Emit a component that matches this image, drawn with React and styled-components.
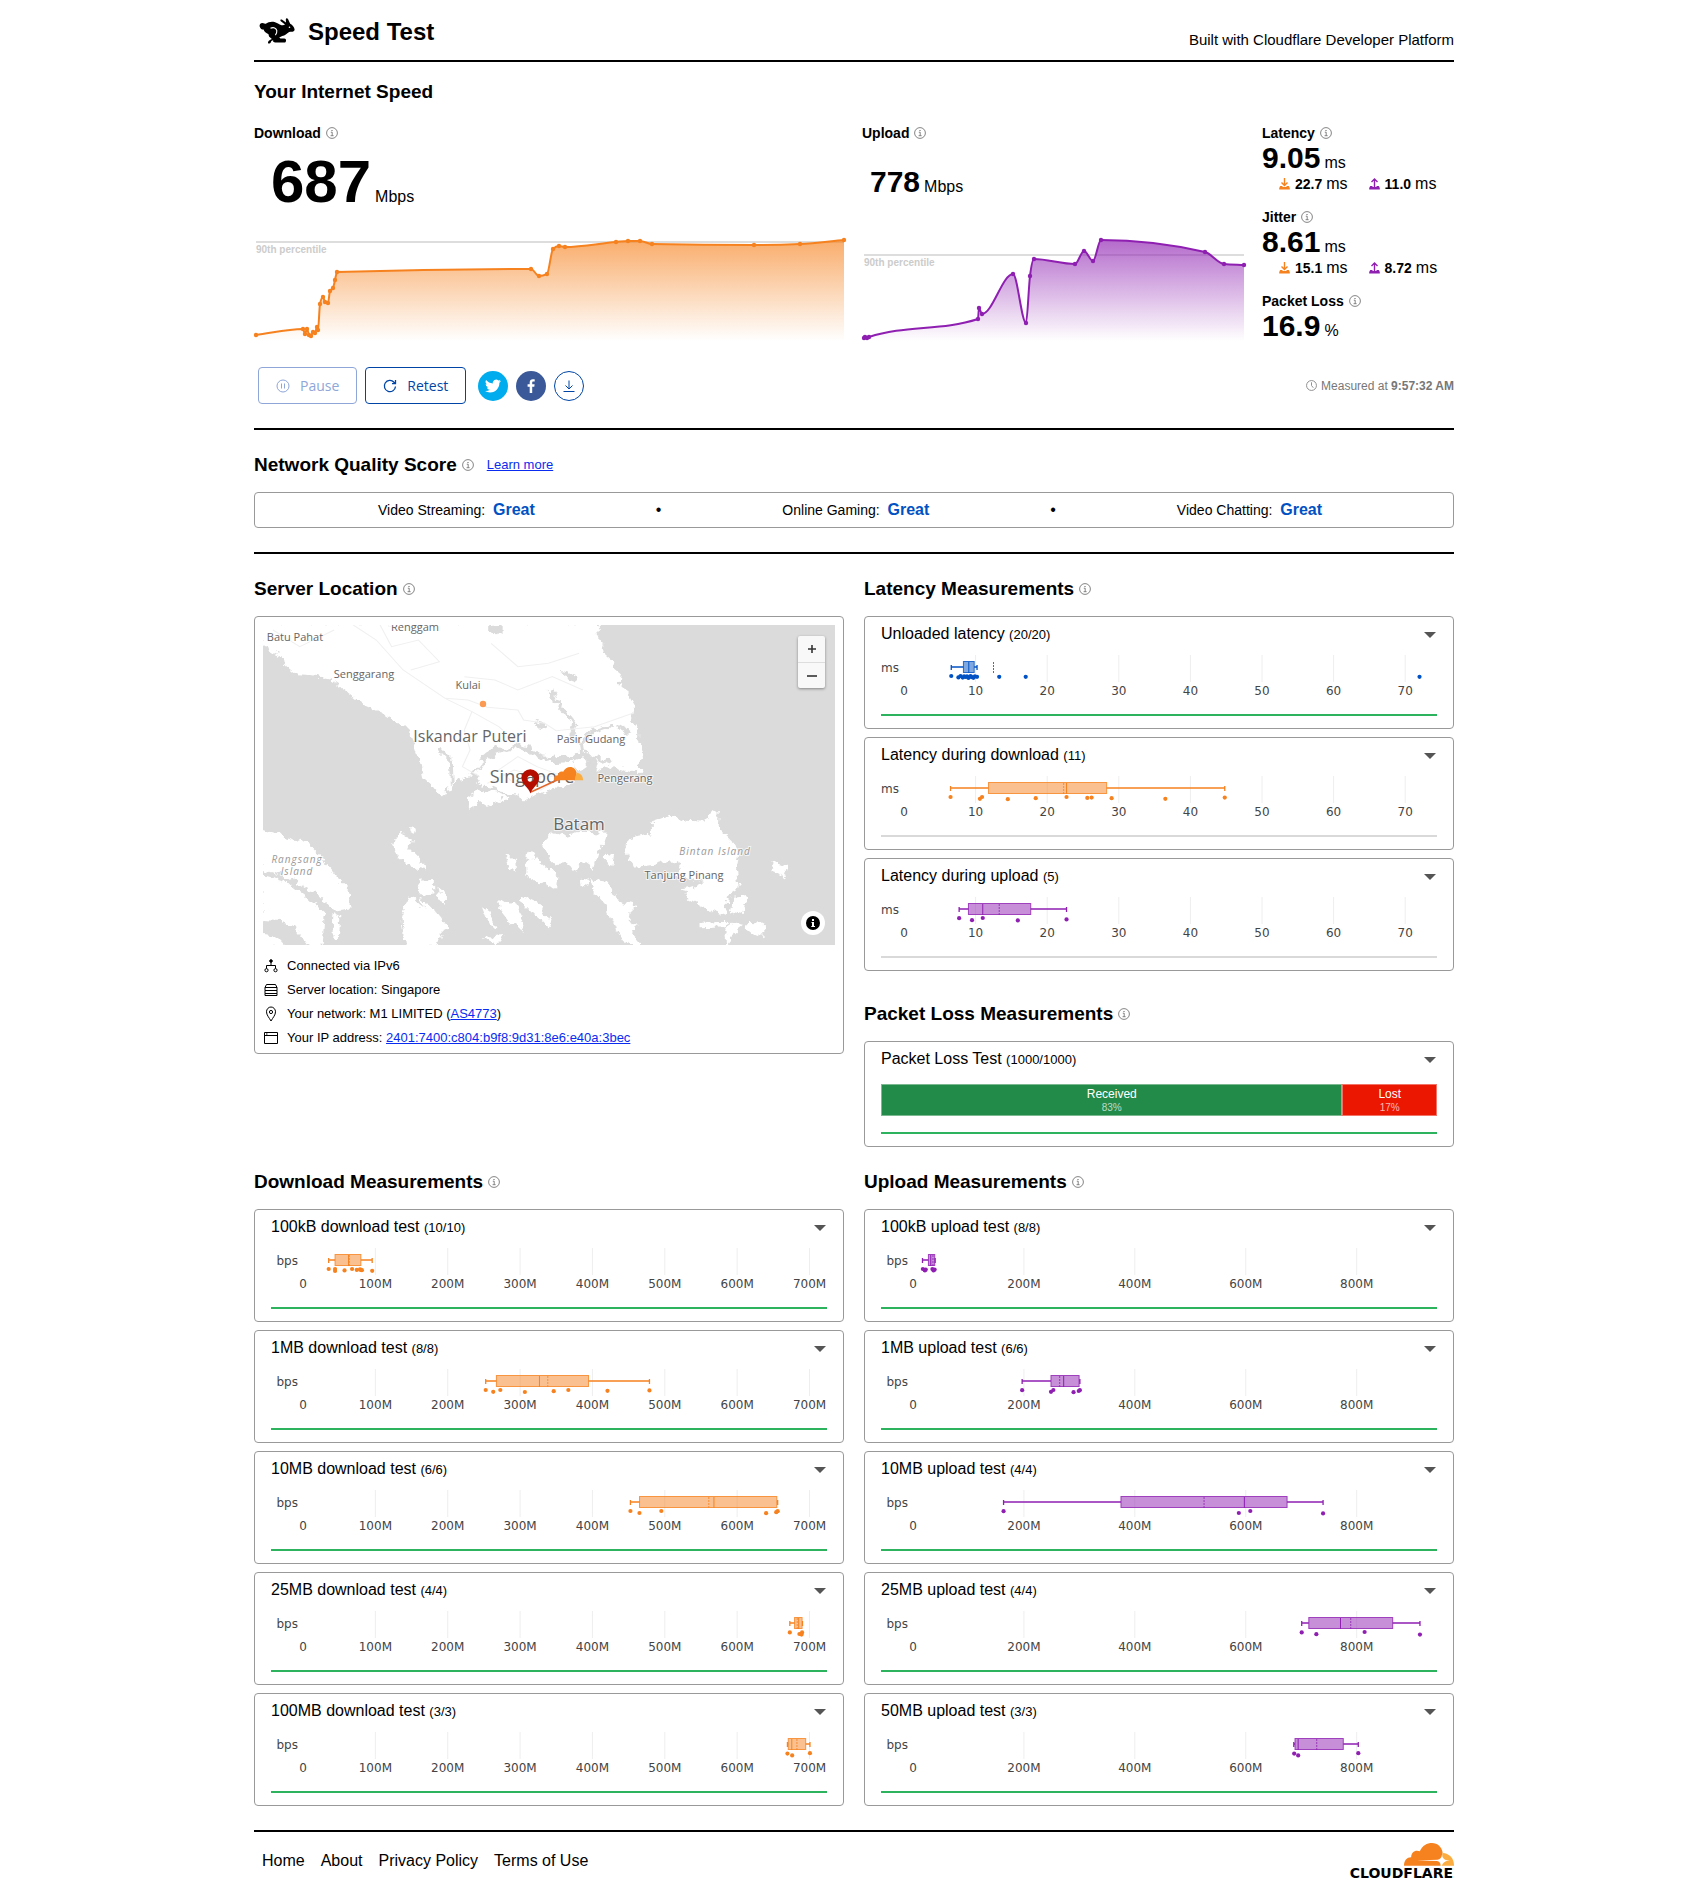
import React from "react"
import styled, { createGlobalStyle } from "styled-components"

const ORANGE = "#f6821f"
const PURPLE = "#8e1fb1"
const BLUE = "#0051c3"

const downloadSpeed = [
  [2, 105], [49, 99], [51, 104], [53, 99], [55, 105], [57, 106], [59, 102],
  [61, 103], [63, 97], [64, 100], [66, 74], [69, 67], [71, 72], [74, 73],
  [76, 61], [79, 58], [81, 50], [83, 42], [277, 39], [285, 46], [293, 44],
  [299, 19], [305, 16], [311, 17], [362, 12], [374, 11], [386, 11], [398, 14],
  [500, 15], [546, 14], [590, 10],
]

const uploadSpeed = [
  [2, 108], [3, 107], [5, 108], [7, 107], [116, 89], [117, 78], [120, 84],
  [151, 44], [164, 93], [168, 46], [172, 29], [213, 34], [222, 21], [231, 31],
  [239, 10], [343, 22], [362, 34], [382, 35],
]

// box = [low, q1, median, q3, high], points = [value, jitter]
const latencyTests = [
  {
    name: "Unloaded latency",
    count: "20/20",
    color: BLUE,
    box: [6.6, 8.3, 9.05, 9.8, 10.2],
    mean: 12.5,
    done: true,
    points: [
      [6.6, 0], [7.6, 1.4], [7.9, 0], [8.2, 1.6], [8.4, 0.4], [8.6, 1],
      [8.8, 0.4], [9, 2], [9.1, 1], [9.3, 0.2], [9.5, 1.2], [9.7, 1.8],
      [9.9, 0.4], [10.2, 0.8], [13.3, 0.8], [17, 0.8], [72, 0.8],
    ],
  },
  {
    name: "Latency during download",
    count: "11",
    color: ORANGE,
    box: [6.5, 11.8, 22.7, 28.3, 44.8],
    mean: 22.3,
    points: [
      [6.5, 0], [10.6, 1.8], [10.9, 0], [14.5, 2.2], [18.4, 1.2], [22.7, 0],
      [25.6, 0.9], [26.2, 0.6], [29, 1.2], [36.5, 1.8], [44.8, 0.6],
    ],
  },
  {
    name: "Latency during upload",
    count: "5",
    color: PURPLE,
    box: [7.7, 9, 11, 17.7, 22.7],
    mean: 13.3,
    points: [[7.7, 0.2], [9.5, 2.2], [11, 0], [15.9, 2.4], [22.7, 1.4]],
  },
]

const downloadTests = [
  {
    name: "100kB download test",
    count: "10/10",
    box: [35.5, 44.3, 63, 80, 95.6],
    mean: 64,
    points: [
      [35.5, 0], [44.3, 0], [44.3, 2], [57.4, 1.4], [67.8, 0], [74.3, 0.8],
      [78.7, 0.4], [80, 0.8], [81.4, 1.2], [95.6, 1.8],
    ],
  },
  {
    name: "1MB download test",
    count: "8/8",
    box: [252.5, 267.3, 326.8, 394.6, 478.8],
    mean: 338.3,
    points: [
      [252.5, 0], [262.9, 1.8], [272.7, 0], [306.6, 2], [346.5, 1.2],
      [366.7, 0], [420.8, 0.8], [478.8, 0.4],
    ],
  },
  {
    name: "10MB download test",
    count: "6/6",
    box: [452.5, 465.1, 567.9, 654.8, 656],
    mean: 560.8,
    points: [
      [452.5, 0], [465, 2], [495.2, 0], [640, 2.2], [654, 1.2], [656, 0.2],
    ],
  },
  {
    name: "25MB download test",
    count: "4/4",
    box: [672.8, 679.3, 685, 689.7, 690.3],
    mean: 683,
    points: [[672.8, 0.4], [686, 2], [689, 2.6], [689.7, 0.4]],
  },
  {
    name: "100MB download test",
    count: "3/3",
    box: [669.5, 670.6, 675.5, 694.7, 700.6],
    mean: 682.6,
    points: [[669.5, 0.6], [676, 2.4], [700.6, 0.2]],
  },
]

const uploadTests = [
  {
    name: "100kB upload test",
    count: "8/8",
    box: [17.1, 27.8, 32, 39.2, 39.9],
    mean: 36,
    points: [
      [17.8, 0], [21.4, 1.4], [23, 0.6], [35, 0], [37, 1.4], [39, 0.6],
    ],
  },
  {
    name: "1MB upload test",
    count: "6/6",
    box: [196.8, 248.8, 271.7, 299.5, 300.9],
    mean: 264.5,
    points: [
      [196.8, 0.2], [248.8, 1.8], [253.1, 0], [289.5, 2.2], [298.8, 1],
      [300.9, 0.2],
    ],
  },
  {
    name: "10MB upload test",
    count: "4/4",
    box: [163.3, 375, 597.5, 674.5, 739.4],
    mean: 524.8,
    points: [[163.3, 0.2], [587.5, 2], [608.2, 0], [739.4, 2.4]],
  },
  {
    name: "25MB upload test",
    count: "4/4",
    box: [700.9, 713.7, 770.8, 864.9, 914.1],
    mean: 789.3,
    points: [[700.9, 0.4], [727.3, 2.2], [814.3, 0], [914.1, 2.6]],
  },
  {
    name: "50MB upload test",
    count: "3/3",
    box: [686.6, 688.8, 694.5, 775.8, 802.9],
    mean: 728,
    points: [[687.3, 0.6], [694.5, 2.4], [802.9, 0.2]],
  },
]

const latencyScale = {
  unit: "ms",
  origin: 23,
  step: 7.16,
  ticks: [10, 20, 30, 40, 50, 60, 70],
  suffix: "",
}

const downloadScale = {
  unit: "bps",
  origin: 32,
  step: 0.7236,
  ticks: [100, 200, 300, 400, 500, 600, 700],
  suffix: "M",
}

const uploadScale = {
  unit: "bps",
  origin: 32,
  step: 0.5546,
  ticks: [200, 400, 600, 800],
  suffix: "M",
}

// monotone cubic through the points, so the curve never overshoots a sample
const monotonePath = pts => {
  const n = pts.length
  const slopes = []
  for (let i = 0; i < n - 1; i++) {
    slopes.push((pts[i + 1][1] - pts[i][1]) / (pts[i + 1][0] - pts[i][0]))
  }
  const tangents = pts.map((p, i) => {
    if (i === 0) return slopes[0]
    if (i === n - 1) return slopes[n - 2]
    const a = slopes[i - 1]
    const b = slopes[i]
    if (a * b <= 0) return 0
    const h0 = p[0] - pts[i - 1][0]
    const h1 = pts[i + 1][0] - p[0]
    const mid = (a * h1 + b * h0) / (h0 + h1)
    return (
      2 * Math.sign(a) * Math.min(Math.abs(a), Math.abs(b), Math.abs(mid) / 2)
    )
  })
  let d = `M${pts[0][0]},${pts[0][1]}`
  for (let i = 0; i < n - 1; i++) {
    const [x0, y0] = pts[i]
    const [x1, y1] = pts[i + 1]
    const dx = (x1 - x0) / 3
    d += `C${x0 + dx},${y0 + dx * tangents[i]} ${x1 - dx},${
      y1 - dx * tangents[i + 1]
    } ${x1},${y1}`
  }
  return d
}

const Info = () => (
  <InfoIcon viewBox="0 0 12 12" aria-hidden="true">
    <circle cx="6" cy="6" r="5.4" />
    <path d="M4.8 5.2h1.4v3.4M4.6 8.7h3" />
    <path d="M6 3v1" strokeWidth="1.1" />
  </InfoIcon>
)

const Rabbit = () => (
  <svg width="36" height="26" viewBox="0 0 36 26" aria-hidden="true">
    <path d="M.6 8.2C.4 6 2.200 4.600 4 5.200 5.200 5.200 6.200 6 6.800 5.700 9 4 12.500 3.200 15.500 4 18 4.600 20 6.500 22.500 7.200 24 7.500 25.200 7.200 26 6.600L21.800 3.200C20.800 2 21.300 1 22.800 1.600L27 4.400 26.800 1.200C27 0 28.300-.1 29 1.100L31.200 5.800C33.500 7 35.300 9.200 35.600 11.400 35.600 12.800 34 14 31.600 13.800 29.500 13.700 28.800 15.200 26.800 16.500 25.800 17.200 24.600 17.800 23.200 18.100L20.200 19.600 21.500 20.600H25.300C27.300 20.600 27.600 23.400 26.200 24.500H16.200C14.500 24.500 13.600 23.300 14.300 22.300L10 18.600 9.500 16.200C7.200 15.400 5 13.800 4.600 11.600 2.800 11.800 1 10.200.6 8.200Z" />
    <path d="M14.500 20.200 11.800 21.400C10 22.200 8.800 23.500 9 24.900 9.400 26 11.200 25.500 11.700 24.400L12.400 23 14.500 22Z" />
    <path
      d="M11.500 10.300C14.500 8.700 17.400 10 17.800 12.700 18 14.600 17.200 16 16.400 17.100"
      fill="none"
      stroke="#fff"
      strokeWidth="1.100"
    />
    <circle cx="30.500" cy="9.300" r=".8" fill="#fff" />
  </svg>
)

const SpeedChart = ({ id, width, color, points, percentile }) => {
  const line = monotonePath(points)
  const first = points[0]
  const last = points[points.length - 1]
  return (
    <ChartSvg viewBox={`0 0 ${width} 112`} role="img" aria-label={id}>
      <defs>
        <linearGradient id={id} x1="0" y1="0" x2="0" y2="1">
          <stop offset="0" stopColor={color} stopOpacity="0.66" />
          <stop offset="1" stopColor={color} stopOpacity="0" />
        </linearGradient>
      </defs>
      <path
        d={`M2,${percentile}H${width}`}
        stroke="#d2d2d2"
        strokeWidth="1.500"
      />
      <ChartNote x="2" y={percentile + 11}>
        90th percentile
      </ChartNote>
      <path
        d={`${line}L${last[0]},111L${first[0]},111Z`}
        fill={`url(#${id})`}
      />
      <path d={line} fill="none" stroke={color} strokeWidth="2" />
      {points.map(([x, y], i) => (
        <circle key={i} cx={x} cy={y} r="2.200" fill={color} />
      ))}
    </ChartSvg>
  )
}

const BoxPlot = ({ scale, color, box, mean, points }) => {
  const x = v => scale.origin + v * scale.step
  const [low, q1, median, q3, high] = box.map(x)
  return (
    <ChartSvg viewBox="0 0 556 56" aria-hidden="true">
      {scale.ticks.map(t => (
        <path key={t} d={`M${x(t)},6V33`} stroke="#eee" />
      ))}
      <AxisText x={scale.origin - 5} y="23" textAnchor="end">
        {scale.unit}
      </AxisText>
      {[0, ...scale.ticks].map(t => (
        <AxisText key={t} x={x(t)} y="46" textAnchor="middle">
          {t}
          {t > 0 && scale.suffix}
        </AxisText>
      ))}
      <g stroke={color} fill="none">
        <path
          d={`M${low},18H${q1}M${q3},18H${high}M${low},16V21M${high},16V21`}
          strokeWidth="1.300"
        />
        <rect
          x={q1}
          y="12.500"
          width={q3 - q1}
          height="11"
          fill={color}
          fillOpacity="0.5"
          strokeOpacity="0.8"
        />
        <path d={`M${median},13V24`} />
        <path d={`M${x(mean)},13V24`} strokeDasharray="2 1" strokeWidth="0.800" />
      </g>
      {points.map(([v, jitter], i) => (
        <circle key={i} cx={x(v)} cy={27 + jitter} r="2.100" fill={color} />
      ))}
    </ChartSvg>
  )
}

const TestCard = ({ name, count, done, children }) => (
  <Card>
    <CardTitle>
      <span>
        {name} <small>({count})</small>
      </span>
      <Toggle type="button" aria-label={`Expand ${name}`}>
        <svg width="12" height="6" viewBox="0 0 12 6">
          <path d="M0 0H12L6 6Z" fill="#555" />
        </svg>
      </Toggle>
    </CardTitle>
    {children}
    <Progress $done={done} />
  </Card>
)

const Tests = ({ tests, scale, color, done }) => (
  <CardList>
    {tests.map(t => (
      <TestCard
        key={t.name}
        name={t.name}
        count={t.count}
        done={done || t.done}
      >
        <BoxPlot {...t} scale={scale} color={color || t.color} />
      </TestCard>
    ))}
  </CardList>
)

const Tray = ({ up, color }) => (
  <svg width="12" height="12" viewBox="0 0 12 12" aria-hidden="true">
    <path
      d={up ? "M5.500 9V1.500M2.500 4L5.500 1L8.500 4" : "M5.500 0V7M2.500 4.500L5.500 7.500L8.500 4.500"}
      fill="none"
      stroke={color}
      strokeWidth="1.400"
    />
    <path
      d="M1.200 8H3L4 9H7L8 8H9.800L10.800 10V11.500H.2V10Z"
      fill={color}
    />
  </svg>
)

const Metric = ({ label, value, unit, down, up }) => (
  <div>
    <Label>
      {label} <Info />
    </Label>
    <MetricValue>
      <strong>{value}</strong>
      {unit}
    </MetricValue>
    {down && (
      <SubMetrics>
        <SubMetric>
          <Tray color={ORANGE} />
          <strong>{down}</strong> ms
        </SubMetric>
        <SubMetric>
          <Tray up color={PURPLE} />
          <strong>{up}</strong> ms
        </SubMetric>
      </SubMetrics>
    )}
  </div>
)

const CloudShape = () => (
  <>
    <path
      d="M0 22.800C-.2 17.500 3.200 14.200 7.200 14.300 7 9.200 11.500 6.300 15.800 8.300 18.500 2.500 23 0 28 0 33.500 0 38 4.200 38.600 9.500L36.500 22.800Z"
      fill={ORANGE}
    />
    <path
      d="M36.500 22.800 38.600 10C45.500 10.300 50.200 15.800 50 22.800Z"
      fill="#fbad41"
    />
  </>
)

const CloudflareLogo = () => (
  <svg width="106" height="42" viewBox="0 0 106 42" role="img">
    <title>Cloudflare</title>
    <g transform="translate(56 3)">
      <CloudShape />
      <path
        d="M13 17.400 33.500 16.800C36 16.500 37.600 14.500 38 11.800 38.400 15 40.200 16.800 43 17.300L46 17.600C41 18 38.500 20 38 22.800H37C36.700 20 35.300 18.200 33 18Z"
        fill="#fff"
      />
    </g>
    <LogoText x="105" y="38" textAnchor="end">
      CLOUDFLARE
    </LogoText>
  </svg>
)

const LAND = [
  "M30,40H905L915,58 906,72 920,100 925,130 945,150 950,175 968,192 966,220 985,245 1005,285 998,330 1015,360 1014,385 1026,410 1030,435 1018,452 1020,488 1000,490 970,478 935,468 900,485 906,455 885,430 855,425 840,440 800,442 762,435 735,412 700,402 665,414 640,412 612,435 600,470 580,492 555,512 530,518 503,562 480,530 455,505 448,465 435,420 420,370 405,350 350,312 300,285 250,240 205,205 160,195 120,193 92,165 88,142 60,125 30,105Z",
  "M610,460 640,432 665,422 700,415 732,428 760,448 800,460 838,455 852,490 848,512 820,530 790,535 750,555 715,566 690,550 660,548 630,532 605,530 588,505Z",
  "M842,452 862,442 886,450 885,470 860,480 845,472Z",
  "M572,560 600,540 650,548 680,560 650,575 620,590 600,575 572,600Z",
  "M785,665 820,680 870,665 935,668 925,700 910,720 895,780 870,760 850,785 835,760 800,765 780,740 765,705Z",
  "M980,710 1000,680 1050,670 1050,635 1100,615 1140,632 1190,635 1205,600 1225,605 1222,650 1258,690 1277,720 1270,780 1277,835 1250,855 1240,918 1190,895 1150,870 1128,838 1165,830 1180,815 1120,800 1095,795 1130,770 1100,750 1060,765 1000,770 985,745Z",
  "M30,658 90,680 150,700 200,762 265,855 262,895 222,902 170,850 110,808 30,778Z",
  "M30,793 90,812 150,865 195,908 190,1010 155,1010 120,960 80,933 30,930Z",
  "M30,975 70,980 95,1010H30Z",
  "M218,912 236,922 232,985 215,985Z",
  "M400,668 420,685 415,710 440,740 458,778 420,770 390,745 372,710 378,685Z",
  "M418,648 434,655 430,672 420,664Z",
  "M445,812 480,810 482,850 450,855 438,840Z",
  "M490,830 512,850 512,880 495,870Z",
  "M440,865 480,895 505,930 518,955 500,965 465,920Z",
  "M415,855 440,885 480,920 502,970 490,1010 405,1010 396,930Z",
  "M668,738 695,740 698,795 680,775Z",
  "M722,758 745,745 775,770 808,802 805,838 760,818 722,797Z",
  "M725,722 745,725 740,755 722,748Z",
  "M648,865 690,880 718,935 712,962 680,937 652,895Z",
  "M710,855 755,880 775,915 790,940 780,955 745,918 712,880Z",
  "M606,892 625,905 648,958 625,945Z",
  "M890,808 935,815 955,870 1012,885 985,915 1010,950 995,965 1025,1005 985,1005 955,950 930,885 898,845Z",
  "M865,805 885,810 880,830 866,825Z",
  "M930,725 952,735 945,772 930,760Z",
  "M1365,758 1405,768 1395,802 1375,790Z",
  "M1180,938 1250,935 1245,952 1180,955Z",
  "M1255,935 1290,945 1265,970 1242,1005 1240,980Z",
  "M1300,935 1340,938 1342,985 1320,975 1298,955Z",
  "M1265,860 1298,855 1285,915 1255,905Z",
  "M608,985 660,978 640,1005Z",
]

const RIVERS = [
  "M785,240 800,275 825,310 850,345 840,375 865,400 868,430",
  "M868,395 895,365 950,345",
  "M495,420 525,455 527,515",
  "M885,455 910,445 945,460",
  "M960,350 992,370",
]

const ROADS = [
  "M270,45 330,90 400,180 510,265 580,305 650,350 700,400",
  "M510,265 570,270 620,292 700,300 715,330 770,340 800,362 900,350 1000,310",
  "M580,305 560,360 575,420 555,470 600,500",
  "M60,60 130,110 220,60",
  "M340,45 370,110 440,90 495,155 420,180",
  "M560,200 640,210 700,240 790,200 870,240",
  "M630,100 700,170 780,160 860,130",
  "M650,480 700,440 750,470 820,500 760,540 690,520Z",
  "M620,520 690,480 760,500 840,495",
]

const PLACES = [
  { x: 32, y: 16, name: "Batu Pahat" },
  { x: 152, y: 6, name: "Renggam" },
  { x: 101, y: 53, name: "Senggarang" },
  { x: 205, y: 64, name: "Kulai" },
  { x: 207, y: 117, name: "Iskandar Puteri", size: 16 },
  { x: 328, y: 118, name: "Pasir Gudang" },
  { x: 362, y: 157, name: "Pengerang" },
  { x: 269, y: 158, name: "Singapore", size: 18 },
  { x: 316, y: 205, name: "Batam", size: 17 },
  { x: 421, y: 254, name: "Tanjung Pinang" },
]

const ISLANDS = [
  { x: 452, y: 230, name: "Bintan Island" },
  { x: 34, y: 238, name: "Rangsang" },
  { x: 34, y: 250, name: "Island" },
]

const ServerMap = () => (
  <MapFrame>
    <MapSvg
      viewBox="0 0 572 320"
      preserveAspectRatio="xMidYMid slice"
      role="img"
      aria-label="Server location map"
    >
      <defs>
        <filter id="coast" x="0" y="0" width="100%" height="100%">
          <feTurbulence
            type="fractalNoise"
            baseFrequency="0.14"
            numOctaves="3"
            seed="4"
          />
          <feDisplacementMap
            in="SourceGraphic"
            scale="10"
            xChannelSelector="R"
            yChannelSelector="G"
          />
        </filter>
      </defs>
      <rect width="572" height="320" fill="#dbdbdb" />
      <g filter="url(#coast)">
        <g transform="translate(-13 -15) scale(0.3827 0.3333)">
          {LAND.map((d, i) => (
            <path key={i} d={d} fill="#fff" />
          ))}
          {RIVERS.map((d, i) => (
            <path key={i} d={d} fill="none" stroke="#dbdbdb" strokeWidth="10" />
          ))}
          <path
            d="M625,45H655V68L640,76 625,66ZM815,185 850,195 850,215 825,205ZM745,335 775,345 765,360 745,350Z"
            fill="#dbdbdb"
          />
        </g>
      </g>
      <g
        transform="translate(-13 -15) scale(0.3827 0.3333)"
        fill="none"
        stroke="#f0f0f0"
        strokeWidth="3"
      >
        {ROADS.map((d, i) => (
          <path key={i} d={d} />
        ))}
      </g>
      {PLACES.map(p => (
        <PlaceName key={p.name} x={p.x} y={p.y} $size={p.size || 11}>
          {p.name}
        </PlaceName>
      ))}
      {ISLANDS.map(p => (
        <IslandName key={p.name} x={p.x} y={p.y}>
          {p.name}
        </IslandName>
      ))}
      <circle cx="220" cy="79" r="3.200" fill="#fb9a52" />
      <path d="M268,167 305,150" stroke="#e0672c" strokeWidth="1.500" />
      <g transform="translate(291 142) scale(0.58)">
        <CloudShape />
      </g>
      <path
        d="M267.500 168.500C265.500 162 258.500 159.500 258.500 153A8.800 8.800 0 0 1 276.100 153C276.100 159.500 269.500 162 267.500 168.500ZM267.300 150.500A3.200 3.200 0 1 0 267.400 150.500Z"
        fill="#b50d00"
        fillRule="evenodd"
      />
    </MapSvg>
    <ZoomControl>
      <button type="button" aria-label="Zoom in">
        <svg width="10" height="10" viewBox="0 0 10 10">
          <path d="M5 1V9M1 5H9" stroke="#333" strokeWidth="1.600" />
        </svg>
      </button>
      <button type="button" aria-label="Zoom out">
        <svg width="10" height="10" viewBox="0 0 10 10">
          <path d="M0 5H10" stroke="#333" strokeWidth="1.600" />
        </svg>
      </button>
    </ZoomControl>
    <Attribution type="button" aria-label="Map attribution">
      <svg width="14" height="14" viewBox="0 0 14 14">
        <circle cx="7" cy="7" r="7" />
        <path
          d="M5.500 6H8V10H9V11H5.300V10H6V7H5.500ZM6 3H8V5H6Z"
          fill="#fff"
        />
      </svg>
    </Attribution>
  </MapFrame>
)

const App = () => (
  <Page>
    <GlobalStyle />
    <Header>
      <Brand>
        <Rabbit />
        <h1>Speed Test</h1>
      </Brand>
      <Tagline>Built with Cloudflare Developer Platform</Tagline>
    </Header>

    <SpeedSection>
      <Heading>Your Internet Speed</Heading>
      <SpeedGrid>
        <div>
          <Label>
            Download <Info />
          </Label>
          <BigValue $large>
            <strong>687</strong>Mbps
          </BigValue>
          <SpeedChart
            id="download-speed"
            width={590}
            color={ORANGE}
            points={downloadSpeed}
            percentile={12}
          />
        </div>
        <div>
          <Label>
            Upload <Info />
          </Label>
          <BigValue>
            <strong>778</strong>Mbps
          </BigValue>
          <SpeedChart
            id="upload-speed"
            width={382}
            color={PURPLE}
            points={uploadSpeed}
            percentile={25}
          />
        </div>
        <Metrics>
          <Metric label="Latency" value="9.05" unit="ms" down="22.7" up="11.0" />
          <Metric label="Jitter" value="8.61" unit="ms" down="15.1" up="8.72" />
          <Metric label="Packet Loss" value="16.9" unit="%" />
        </Metrics>
      </SpeedGrid>
      <Actions>
        <ActionButton type="button" disabled>
          <svg width="14" height="14" viewBox="0 0 14 14" fill="none" stroke="currentColor">
            <circle cx="7" cy="7" r="6" />
            <path d="M5.500 4.500V9.500M8.500 4.500V9.500" />
          </svg>
          Pause
        </ActionButton>
        <ActionButton type="button">
          <svg width="14" height="14" viewBox="0 0 14 14" fill="none" stroke="currentColor" strokeWidth="1.300">
            <path d="M12.500 7.500A5.600 5.600 0 1 1 11 3.200L12.500 4.500M12.500 1V4.700H9" />
          </svg>
          Retest
        </ActionButton>
        <Shares>
          <Round href="#twitter" aria-label="Share on Twitter" $bg="#00aced">
            <svg width="16" height="16" viewBox="0 0 24 24" fill="#fff">
              <path d="M23.950 4.570a10 10 0 0 1-2.820.770 4.960 4.960 0 0 0 2.160-2.720c-.950.550-2 .950-3.130 1.180a4.920 4.920 0 0 0-8.380 4.480C7.690 8.090 4.070 6.130 1.640 3.160a4.920 4.920 0 0 0 1.520 6.570 4.900 4.900 0 0 1-2.230-.620v.060a4.920 4.920 0 0 0 3.950 4.830 5 5 0 0 1-2.210.080 4.940 4.940 0 0 0 4.600 3.420A9.870 9.870 0 0 1 0 19.540a13.990 13.990 0 0 0 7.550 2.210c9.050 0 14-7.500 14-13.980l-.020-.640a9.940 9.940 0 0 0 2.420-2.560z" />
            </svg>
          </Round>
          <Round href="#facebook" aria-label="Share on Facebook" $bg="#3b5998">
            <svg width="16" height="16" viewBox="0 0 16 16" fill="#fff">
              <path d="M9.200 15V8.700H11.300L11.600 6.300H9.200V4.800C9.200 4.100 9.400 3.600 10.400 3.600H11.700V1.400C11.500 1.400 10.700 1.300 9.800 1.300 8 1.300 6.700 2.400 6.700 4.500V6.300H4.600V8.700H6.700V15Z" />
            </svg>
          </Round>
          <Round as="button" type="button" aria-label="Download results">
            <svg width="14" height="14" viewBox="0 0 14 14" fill="none" stroke="#0045a6">
              <path d="M7 1.500V9.500M3.500 6.500 7 10 10.500 6.500M1.500 12.500H12.500" />
            </svg>
          </Round>
        </Shares>
        <Measured>
          <svg width="11" height="11" viewBox="0 0 12 12" fill="none" stroke="#888">
            <circle cx="6" cy="6" r="5.400" />
            <path d="M6 2.500V6L8 8.500" />
          </svg>
          <span>
            Measured at <strong>9:57:32 AM</strong>
          </span>
        </Measured>
      </Actions>
    </SpeedSection>

    <QualitySection>
      <Heading>
        Network Quality Score <Info />
        <LearnMore href="#learn-more">Learn more</LearnMore>
      </Heading>
      <Scores>
        <Score>
          Video Streaming: <strong>Great</strong>
        </Score>
        <span>•</span>
        <Score>
          Online Gaming: <strong>Great</strong>
        </Score>
        <span>•</span>
        <Score>
          Video Chatting: <strong>Great</strong>
        </Score>
      </Scores>
    </QualitySection>

    <Columns>
      <section>
        <Heading>
          Server Location <Info />
        </Heading>
        <MapCard>
          <ServerMap />
          <Details>
            <li>
              <svg width="14" height="14" viewBox="0 0 14 14" fill="none" stroke="#000">
                <path d="M7 2V6.500M2.500 9.500V6.500H11.500V9.500" />
                <circle cx="7" cy="2" r="1.300" fill="#000" />
                <circle cx="2.500" cy="11.200" r="1.600" />
                <circle cx="11.500" cy="11.200" r="1.600" />
              </svg>
              Connected via IPv6
            </li>
            <li>
              <svg width="14" height="14" viewBox="0 0 14 14" fill="none" stroke="#000">
                <path d="M2.500 1.500H11.500L13 4.500H1ZM1 4.500H13V7.500H1ZM1 7.500H13V10.500H1ZM1 10.500H13V12.500H1Z" />
              </svg>
              Server location: Singapore
            </li>
            <li>
              <svg width="14" height="16" viewBox="0 0 14 16" fill="none" stroke="#000">
                <path d="M7 15C5 11.500 2.500 9 2.500 5.800A4.500 4.800 0 0 1 11.500 5.800C11.500 9 9 11.500 7 15Z" />
                <circle cx="7" cy="6" r="1.600" />
              </svg>
              <span>
                Your network: M1 LIMITED (<a href="#as4773">AS4773</a>)
              </span>
            </li>
            <li>
              <svg width="14" height="14" viewBox="0 0 14 14" fill="none" stroke="#000">
                <path d="M.5 1.500H13.500V12.500H.5ZM.5 4.500H13.500M2 3H3.500" />
              </svg>
              <span>
                Your IP address:{" "}
                <a href="#ip">2401:7400:c804:b9f8:9d31:8e6:e40a:3bec</a>
              </span>
            </li>
          </Details>
        </MapCard>
      </section>

      <Stack>
        <section>
          <Heading>
            Latency Measurements <Info />
          </Heading>
          <Tests tests={latencyTests} scale={latencyScale} />
        </section>
        <section>
          <Heading>
            Packet Loss Measurements <Info />
          </Heading>
          <TestCard name="Packet Loss Test" count="1000/1000" done>
            <LossBar>
              <LossPart $share={83} $bg="#238b49">
                Received<small>83%</small>
              </LossPart>
              <LossPart $share={17} $bg="#eb1700">
                Lost<small>17%</small>
              </LossPart>
            </LossBar>
          </TestCard>
        </section>
      </Stack>

      <section>
        <Heading>
          Download Measurements <Info />
        </Heading>
        <Tests tests={downloadTests} scale={downloadScale} color={ORANGE} done />
      </section>
      <section>
        <Heading>
          Upload Measurements <Info />
        </Heading>
        <Tests tests={uploadTests} scale={uploadScale} color={PURPLE} done />
      </section>
    </Columns>

    <Footer>
      <nav>
        <a href="#home">Home</a>
        <a href="#about">About</a>
        <a href="#privacy">Privacy Policy</a>
        <a href="#terms">Terms of Use</a>
      </nav>
      <CloudflareLogo />
    </Footer>
  </Page>
)

export default App

const GlobalStyle = createGlobalStyle`
  *, *::before, *::after {
    box-sizing: border-box;
  }
  body {
    margin: 0;
    background: #fff;
    color: #000;
    font-family: "Liberation Sans", Arial, sans-serif;
    font-size: 16px;
    line-height: 20px;
  }
  h1, h2, ul {
    margin: 0;
    padding: 0;
  }
  button {
    font: inherit;
    cursor: pointer;
  }
  svg {
    flex: none;
  }
`

const Page = styled.main`
  max-width: 1200px;
  margin: 0 auto;
`

const Header = styled.header`
  display: flex;
  justify-content: space-between;
  align-items: flex-end;
  padding: 18px 0 10px;
  border-bottom: 2px solid #000;
`

const Brand = styled.div`
  display: flex;
  align-items: flex-start;
  gap: 13px;
  padding: 0 0 4px 5px;

  h1 {
    font-size: 24px;
    line-height: 28px;
  }
`

const Tagline = styled.span`
  font-size: 15px;
`

const SpeedSection = styled.section`
  padding: 17px 0 24px;
  border-bottom: 2px solid #000;
`

const QualitySection = styled.section`
  padding: 22px 0 24px;
  border-bottom: 2px solid #000;
`

const Heading = styled.h2`
  display: flex;
  align-items: center;
  gap: 5px;
  font-size: 19px;
  line-height: 26px;
  margin-bottom: 14px;
`

const InfoIcon = styled.svg`
  width: 12px;
  height: 12px;
  fill: none;
  stroke: #666;
  stroke-width: 0.8px;
`

const SpeedGrid = styled.div`
  display: grid;
  grid-template-columns: 590fr 382fr 192fr;
  gap: 18px;
  margin-top: 20px;
`

const Label = styled.div`
  display: flex;
  align-items: center;
  gap: 5px;
  font-size: 14px;
  font-weight: bold;
  line-height: 16px;
`

const BigValue = styled.div`
  display: flex;
  align-items: baseline;
  gap: 4px;
  height: 89px;
  padding: ${props => (props.$large ? "11px 0 0 17px" : "23px 0 0 8px")};

  strong {
    font-size: ${props => (props.$large ? "60px" : "30px")};
    line-height: ${props => (props.$large ? "60px" : "36px")};
  }
`

const ChartSvg = styled.svg`
  display: block;
  width: 100%;
  height: auto;
  overflow: visible;
`

const ChartNote = styled.text`
  font-size: 10px;
  font-weight: bold;
  fill: #ccc;
`

const AxisText = styled.text`
  font-family: "DejaVu Sans", Verdana, sans-serif;
  font-size: 12px;
  fill: #444;
`

const Metrics = styled.div`
  display: flex;
  flex-direction: column;
  gap: 15px;
`

const MetricValue = styled.div`
  display: flex;
  align-items: baseline;
  gap: 4px;
  height: 33px;
  padding-top: 1px;

  strong {
    font-size: 30px;
    line-height: 32px;
  }
`

const SubMetrics = styled.div`
  display: flex;
  gap: 21px;
  padding-left: 17px;
`

const SubMetric = styled.span`
  display: flex;
  align-items: center;
  gap: 4px;

  strong {
    font-size: 14px;
  }
`

const Actions = styled.div`
  display: flex;
  align-items: center;
  gap: 8px;
  margin-top: 25px;
  padding-left: 4px;
`

const ActionButton = styled.button`
  display: flex;
  align-items: center;
  gap: 10px;
  height: 37px;
  padding: 0 17px;
  border: 1px solid #0045a6;
  border-radius: 4px;
  background: #fff;
  color: #0045a6;
  font-family: "Open Sans", sans-serif;
  font-size: 14px;

  &:disabled {
    border-color: #8ea6d8;
    color: #8ea6d8;
    cursor: default;
  }
`

const Shares = styled.div`
  display: flex;
  gap: 8px;
  padding-left: 4px;
`

const Round = styled.a`
  display: flex;
  align-items: center;
  justify-content: center;
  width: 30px;
  height: 30px;
  padding: 0;
  border: ${props => (props.$bg ? "none" : "1px solid #0045a6")};
  border-radius: 50%;
  background: ${props => props.$bg || "#fff"};
`

const Measured = styled.div`
  display: flex;
  align-items: center;
  gap: 4px;
  margin-left: auto;
  color: #777;
  font-size: 12px;
`

const LearnMore = styled.a`
  margin-left: 8px;
  color: #0a2cf0;
  font-size: 13px;
  font-weight: normal;
`

const Scores = styled.div`
  display: flex;
  align-items: center;
  justify-content: space-evenly;
  height: 36px;
  padding: 0 10px 0 2px;
  border: 1px solid #999;
  border-radius: 4px;
`

const Score = styled.div`
  font-size: 14px;

  strong {
    margin-left: 4px;
    color: ${BLUE};
    font-size: 16px;
  }
`

const Columns = styled.div`
  display: grid;
  grid-template-columns: 1fr 1fr;
  gap: 22px 20px;
  padding: 22px 0 24px;
  border-bottom: 2px solid #000;
`

const Stack = styled.div`
  display: flex;
  flex-direction: column;
  gap: 30px;
`

const CardList = styled.div`
  display: flex;
  flex-direction: column;
  gap: 8px;
`

const Card = styled.div`
  padding: 6px 16px 12px;
  border: 1px solid #999;
  border-radius: 4px;
`

const CardTitle = styled.div`
  display: flex;
  align-items: center;
  justify-content: space-between;
  height: 22px;
  margin-bottom: 4px;

  small {
    font-size: 13px;
  }
`

const Toggle = styled.button`
  display: flex;
  padding: 3px 1px 1px;
  border: none;
  background: none;
`

const Progress = styled.div`
  height: 2px;
  margin-top: 9px;
  background: ${props => (props.$done ? "#2db35e" : "#d9d9d9")};
`

const LossBar = styled.div`
  display: flex;
  height: 32px;
  margin: 14px 0 16px;
`

const LossPart = styled.div`
  display: flex;
  width: ${props => props.$share}%;
  flex-direction: column;
  align-items: center;
  justify-content: center;
  border: 1px solid rgba(255, 255, 255, 0.4);
  background: ${props => props.$bg};
  color: #fff;
  font-size: 12px;
  line-height: 15px;

  small {
    color: rgba(255, 255, 255, 0.7);
    font-size: 10px;
    line-height: 12px;
  }
`

const MapCard = styled.div`
  padding: 8px 8px 3px;
  border: 1px solid #999;
  border-radius: 4px;
`

const MapFrame = styled.div`
  position: relative;
  overflow: hidden;
`

const MapSvg = styled.svg`
  display: block;
  width: 100%;
  height: 320px;
`

const PlaceName = styled.text`
  font-family: "Open Sans", "Noto Sans", sans-serif;
  font-size: ${props => props.$size}px;
  text-anchor: middle;
  fill: #666;
  stroke: rgba(255, 255, 255, 0.7);
  stroke-width: 2px;
  paint-order: stroke;
`

const IslandName = styled(PlaceName)`
  font-size: 10px;
  font-style: italic;
  letter-spacing: 1px;
  fill: #999;
`

const ZoomControl = styled.div`
  position: absolute;
  top: 11px;
  right: 10px;
  display: flex;
  flex-direction: column;
  border-radius: 2px;
  background: #f8f8f8;
  box-shadow: 0 1px 3px rgba(0, 0, 0, 0.4);

  button {
    display: flex;
    align-items: center;
    justify-content: center;
    width: 27px;
    height: 26px;
    padding: 0;
    border: none;
    background: none;
  }

  button + button {
    border-top: 1px solid #ddd;
  }
`

const Attribution = styled.button`
  position: absolute;
  right: 10px;
  bottom: 10px;
  display: flex;
  align-items: center;
  justify-content: center;
  width: 24px;
  height: 24px;
  padding: 0;
  border: none;
  border-radius: 50%;
  background: #fff;
`

const Details = styled.ul`
  display: flex;
  flex-direction: column;
  padding-top: 9px;
  list-style: none;
  font-size: 13px;
  line-height: 24px;

  li {
    display: flex;
    align-items: center;
    gap: 9px;
    height: 24px;
    padding-left: 1px;
  }

  a {
    color: #0a2cf0;
  }
`

const Footer = styled.footer`
  display: flex;
  justify-content: space-between;
  align-items: center;
  padding: 8px 0 15px;

  nav {
    display: flex;
    gap: 16px;
    padding-left: 8px;
  }

  a {
    color: #000;
    text-decoration: none;
  }
`

const LogoText = styled.text`
  font-family: "DejaVu Sans", sans-serif;
  font-size: 14px;
  font-weight: bold;
`
